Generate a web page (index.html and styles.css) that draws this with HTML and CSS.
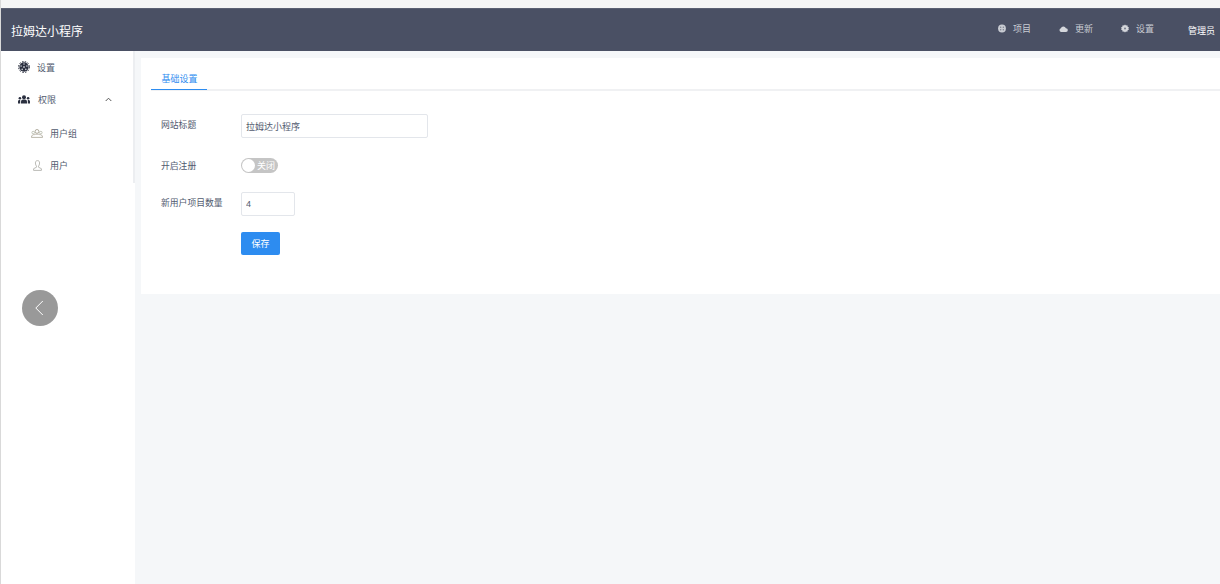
FILE: index.html
```html
<!DOCTYPE html>
<html lang="zh-CN">
<head>
    <meta charset="UTF-8">
    <meta name="viewport" content="width=device-width, initial-scale=1.0">
    <title>拉姆达小程序</title>
    <link rel="stylesheet" href="styles.css">
</head>
<body>

<div class="page">
    <header class="topbar">
        <div class="brand">拉姆达小程序</div>
        <nav class="topnav">
            <a class="topnav-item">
                <svg width="8" height="9" viewBox="0 0 9 10"><circle cx="4.5" cy="5" r="4.4" fill="#c9ccd3"/><circle cx="3" cy="3.6" r="0.8" fill="#7b8090"/><circle cx="6" cy="3.6" r="0.8" fill="#7b8090"/><circle cx="3" cy="6.4" r="0.8" fill="#7b8090"/><circle cx="6" cy="6.4" r="0.8" fill="#7b8090"/></svg>
                <span>项目</span>
            </a>
            <a class="topnav-item">
                <svg width="9" height="6" viewBox="0 0 10 7"><path d="M2.3 7A2.2 2.2 0 0 1 1.9 2.7 3.1 3.1 0 0 1 7.8 2.6 2.2 2.2 0 0 1 7.9 7Z" fill="#d5d7dc"/></svg>
                <span>更新</span>
            </a>
            <a class="topnav-item">
                <svg width="8" height="9" viewBox="0 0 10 10"><path d="M5 0 6.2 1.3 8 1 8.3 2.8 10 3.6 9.2 5 10 6.4 8.3 7.2 8 9 6.2 8.7 5 10 3.8 8.7 2 9 1.7 7.2 0 6.4.8 5 0 3.6 1.7 2.8 2 1 3.8 1.3Z" fill="#d5d7dc"/><circle cx="5" cy="5" r="1.1" fill="#6b7080"/></svg>
                <span>设置</span>
            </a>
            <a class="topnav-user">管理员</a>
        </nav>
    </header>

    <div class="layout">
        <aside class="sidebar">
            <div class="side-item">
                <svg class="side-icon gear-icon" width="12" height="12" viewBox="0 0 12 12"><circle cx="6" cy="6" r="4.7" fill="#2b3040"/><circle cx="6" cy="6" r="5.5" fill="none" stroke="#2b3040" stroke-width="1" stroke-dasharray="1.5 1.4"/><g fill="#c4c7cf"><circle cx="6" cy="6" r=".9"/><circle cx="6" cy="3" r=".8"/><circle cx="8.9" cy="5.1" r=".8"/><circle cx="7.8" cy="8.4" r=".8"/><circle cx="4.2" cy="8.4" r=".8"/><circle cx="3.1" cy="5.1" r=".8"/></g></svg>
                <span>设置</span>
            </div>
            <div class="side-item">
                <svg class="side-icon" width="12" height="9" viewBox="0 0 12 9"><circle cx="6" cy="2.2" r="2" fill="#2b3040"/><path d="M3 8.6V6.4C3 5 4.4 4.6 6 4.6S9 5 9 6.4V8.6Z" fill="#2b3040"/><circle cx="1.9" cy="3.3" r="1.3" fill="#2b3040"/><circle cx="10.1" cy="3.3" r="1.3" fill="#2b3040"/><path d="M0 8.6V6.4C0 5.4.8 5 2.2 5V8.6ZM12 8.6V6.4C12 5.4 11.2 5 9.8 5V8.6Z" fill="#2b3040"/></svg>
                <span>权限</span>
                <svg class="side-arrow" width="7" height="5" viewBox="0 0 7 5"><path d="M.7 4 3.5 1.2 6.3 4" fill="none" stroke="#555" stroke-width="1"/></svg>
            </div>
            <div class="side-item side-sub side-group">
                <svg class="sub-icon" width="12" height="9" viewBox="0 0 12 9"><circle cx="6" cy="2.4" r="1.9" fill="none" stroke="#a9a595" stroke-width=".9"/><circle cx="2.2" cy="3.6" r="1.3" fill="none" stroke="#b4b8a8" stroke-width=".8"/><circle cx="9.8" cy="3.6" r="1.3" fill="none" stroke="#b4b8a8" stroke-width=".8"/><path d="M.4 8.4C.6 6 2 5.6 3.5 5.6 4.2 5 7.8 5 8.5 5.6 10 5.6 11.4 6 11.6 8.4Z" fill="none" stroke="#a9a595" stroke-width=".8"/></svg>
                <span>用户组</span>
            </div>
            <div class="side-item side-sub">
                <svg class="sub-icon user-icon" width="9" height="11" viewBox="0 0 9 11"><path d="M4.5.6C3 .6 2.4 1.7 2.4 3 2.4 4.5 3 5.6 3.5 6.2V7.2L.6 8.7V10.4H8.4V8.7L5.5 7.2V6.2C6 5.6 6.6 4.5 6.6 3 6.6 1.7 6 .6 4.5.6Z" fill="none" stroke="#aaa9a3" stroke-width=".8"/></svg>
                <span>用户</span>
            </div>
        </aside>

        <main class="content">
            <section class="card">
                <div class="tabs">
                    <div class="tab active">基础设置</div>
                </div>
                <form class="form">
                    <div class="form-row row-title">
                        <label>网站标题</label>
                        <input class="input input-wide" type="text" value="拉姆达小程序">
                    </div>
                    <div class="form-row row-switch">
                        <label>开启注册</label>
                        <span class="switch"><i class="knob"></i><em>关闭</em></span>
                    </div>
                    <div class="form-row row-count">
                        <label>新用户项目数量</label>
                        <input class="input input-small" type="text" value="4">
                    </div>
                    <div class="form-row row-save">
                        <label></label>
                        <button class="btn" type="button">保存</button>
                    </div>
                </form>
            </section>
        </main>
    </div>

    <div class="back-btn">
        <svg width="12" height="16" viewBox="0 0 12 16"><path d="M8.8 1 1.8 8 8.8 15" fill="none" stroke="#fff" stroke-width="1"/></svg>
    </div>
</div>

</body>
</html>
```

FILE: styles.css
```css
* {
    box-sizing: border-box;
}
html, body {
    margin: 0;
    padding: 0;
    height: 100%;
    overflow: hidden;
}
body {
    font-family: "Liberation Sans", "Noto Sans CJK SC", sans-serif;
    font-size: 9px;
    color: #515a6e;
    background-color: #f5f7f9;
}
.page {
    position: relative;
    height: 584px;
    padding-top: 8px;
    border-left: 1px solid #d9d9d9;
    background: linear-gradient(#f5f5f5 8px, transparent 8px);
}
.topbar {
    height: 43px;
    background-color: #4a5064;
    border-top: 1px solid #5b6072;
    display: flex;
    align-items: center;
    justify-content: space-between;
    color: #fff;
}
.brand {
    margin-left: 10px;
    font-size: 12px;
    color: #fff;
}
.topnav {
    display: flex;
    align-items: center;
    margin-top: -3px;
}
.topnav-item {
    display: flex;
    align-items: center;
    gap: 7px;
    margin-right: 28px;
    color: #c9ccd3;
    font-size: 9px;
}
.topnav-user {
    margin-left: 6px;
    margin-right: 4px;
    width: 28px;
    color: #fff;
    font-size: 9px;
    margin-top: 3px;
}
.layout {
    display: flex;
    height: 533px;
}
.sidebar {
    width: 134px;
    background: #fff;
    background-image: linear-gradient(#eceef1, #eceef1);
    background-size: 2px 132px;
    background-position: right top;
    background-repeat: no-repeat;
}
.side-item {
    display: flex;
    align-items: center;
    height: 33px;
    padding-left: 17px;
    color: #515a6e;
    font-size: 9px;
}
.side-item:first-child, .side-item:last-child {
    height: 32px;
}
.side-icon {
    margin-right: 8px;
}
.gear-icon {
    margin-right: 7px;
}
.side-arrow {
    margin-left: 49px;
}
.side-sub {
    padding-left: 30px;
}
.side-group {
    padding-top: 1px;
}
.sub-icon {
    margin-right: 7px;
}
.user-icon {
    margin-left: 2px;
    margin-right: 8px;
}
.content {
    flex: 1;
    padding: 7px 0 0 6px;
}
.card {
    height: 236px;
    background: #fff;
    padding: 10px 0 0 10px;
}
.tabs {
    height: 23px;
    border-bottom: 2px solid #f0f1f3;
    display: flex;
}
.tab {
    width: 56px;
    height: 22px;
    padding-left: 1px;
    text-align: center;
    line-height: 23px;
    color: #2d8cf0;
    font-size: 9px;
}
.tab.active {
    border-bottom: 1px solid #2d8cf0;
}
.form {
    padding: 23px 0 0 10px;
}
.form-row {
    display: flex;
}
.form-row label {
    width: 80px;
    color: #515a6e;
    font-size: 8.8px;
}
.row-title {
    height: 24px;
}
.row-title label {
    line-height: 23px;
}
.row-switch {
    height: 16px;
    margin-top: 19px;
    align-items: center;
}
.row-count {
    height: 24px;
    margin-top: 19px;
}
.row-count label {
    line-height: 22px;
}
.row-save {
    margin-top: 16px;
}
.input {
    height: 24px;
    padding: 0 4px;
    border: 1px solid #e3e6eb;
    border-radius: 2px;
    color: #515a6e;
    font-family: inherit;
    font-size: 9px;
    background: #fff;
}
.input-wide {
    width: 187px;
}
.input-small {
    width: 54px;
}
.switch {
    display: flex;
    align-items: center;
    width: 37px;
    height: 15px;
    border-radius: 8px;
    background: #c5c5c5;
    padding-left: 1px;
    color: #fff;
}
.knob {
    width: 13px;
    height: 13px;
    border-radius: 50%;
    background: #fff;
}
.switch em {
    font-style: normal;
    font-size: 9px;
    margin-left: 2px;
}
.btn {
    width: 39px;
    height: 23px;
    border: none;
    border-radius: 2px;
    background: #2d8cf0;
    color: #fff;
    font-family: inherit;
    font-size: 9px;
    padding: 0;
}
.back-btn {
    position: absolute;
    left: 21px;
    top: 290px;
    width: 36px;
    height: 36px;
    border-radius: 50%;
    background: #999;
    display: flex;
    align-items: center;
    justify-content: center;
}
```
